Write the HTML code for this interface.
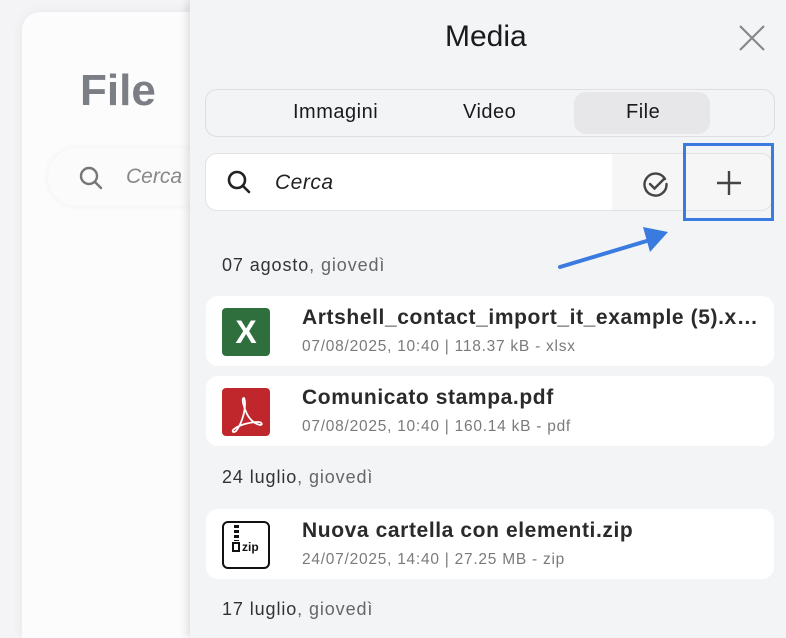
<!DOCTYPE html>
<html><head><style>
*{box-sizing:border-box;margin:0;padding:0}
html,body{width:786px;height:638px;overflow:hidden}
body{background:#f4f4f6;font-family:"Liberation Sans",sans-serif;position:relative}
.abs{position:absolute}
.card{left:206px;width:568px;height:70px;background:#fff;border-radius:12px}
.ic{left:16px;top:12px;width:48px;height:48px;border-radius:4px}
.t{left:96px;top:10px;font-size:21px;font-weight:bold;color:#2a2a2a;white-space:nowrap;width:458px;overflow:hidden;text-overflow:ellipsis;letter-spacing:0.6px}
.s{left:96px;top:42px;font-size:15.5px;color:#7a7a7a;white-space:nowrap;letter-spacing:0.75px}
.d{left:222px;font-size:18px;color:#333;letter-spacing:0.9px}
.d span{color:#666}
</style></head><body>
<div class="abs" style="left:22px;top:12px;width:200px;height:626px;background:#fcfcfc;border-radius:18px 18px 0 0;box-shadow:0 0 12px rgba(0,0,0,.06)"></div>
<div class="abs" style="left:80px;top:66px;font-size:44px;font-weight:bold;color:#7c7e85">File</div>
<div class="abs" style="left:48px;top:148px;width:160px;height:58px;border-radius:29px;background:#fbfbfb;box-shadow:0 0 8px rgba(0,0,0,.05)"></div>
<svg class="abs" style="left:78px;top:165px" width="26" height="26" viewBox="0 0 26 26"><circle cx="11" cy="11" r="8" fill="none" stroke="#777" stroke-width="2.4"/><line x1="17" y1="17" x2="23" y2="23" stroke="#777" stroke-width="2.4" stroke-linecap="round"/></svg>
<div class="abs" style="left:126px;top:165px;font-size:21px;font-style:italic;color:#888">Cerca</div>
<div class="abs" style="left:190px;top:0;width:596px;height:638px;background:#f3f4f6;box-shadow:-3px 0 8px rgba(0,0,0,.12)"></div>
<div class="abs" style="left:445px;top:20px;font-size:30px;color:#1a1a1a">Media</div>
<svg class="abs" style="left:738px;top:24px" width="28" height="28"><path d="M2 2L26 26M26 2L2 26" stroke="#888" stroke-width="2.2"/></svg>
<div class="abs" style="left:205px;top:89px;width:570px;height:48px;border:1px solid #dedee2;border-radius:12px;background:#f3f4f6"></div>
<div class="abs" style="left:574px;top:92px;width:136px;height:42px;border-radius:12px;background:#e7e7ea"></div>
<div class="abs" style="left:293px;top:101px;font-size:20px;color:#1a1a1a;letter-spacing:0.5px">Immagini</div>
<div class="abs" style="left:463px;top:101px;font-size:20px;color:#1a1a1a;letter-spacing:0.5px">Video</div>
<div class="abs" style="left:626px;top:101px;font-size:20px;color:#1a1a1a;letter-spacing:0.5px">File</div>
<div class="abs" style="left:205px;top:153px;width:568px;height:58px;border:1px solid #e2e2e5;border-radius:12px;background:#f6f6f7;overflow:hidden"><div style="width:406px;height:58px;background:#fff"></div></div>
<svg class="abs" style="left:226px;top:169px" width="26" height="26" viewBox="0 0 26 26"><circle cx="11" cy="11" r="8" fill="none" stroke="#222" stroke-width="2.6"/><line x1="17" y1="17" x2="23" y2="23" stroke="#222" stroke-width="2.6" stroke-linecap="round"/></svg>
<div class="abs" style="left:275px;top:171px;font-size:21px;font-style:italic;color:#222;letter-spacing:0.5px">Cerca</div>
<svg class="abs" style="left:642px;top:170px" width="28" height="28" viewBox="0 0 28 28"><path d="M23 9A11 11 0 1 0 24.5 14" fill="none" stroke="#444" stroke-width="2.4" stroke-linecap="round"/><path d="M8 14l4.5 4.5L22 9" fill="none" stroke="#444" stroke-width="2.4" stroke-linecap="round"/></svg>
<svg class="abs" style="left:715px;top:169px" width="28" height="28"><path d="M14 2v24M2 14h24" stroke="#444" stroke-width="2.4"/></svg>
<div class="abs" style="left:683px;top:143px;width:91px;height:78px;border:3.5px solid #3a7be0"></div>
<svg class="abs" style="left:555px;top:222px" width="120" height="52"><line x1="5" y1="45" x2="95" y2="18" stroke="#3a7be0" stroke-width="4" stroke-linecap="round"/><polygon points="113,10 88,5 95,30" fill="#3a7be0"/></svg>
<div class="abs d" style="top:255px">07 agosto<span>, giovedì</span></div>
<div class="abs card" style="top:296px">
<div class="abs ic" style="background:#2f6f3e;color:#fff;font-size:32px;font-weight:bold;text-align:center;line-height:48px">X</div>
<div class="abs t">Artshell_contact_import_it_example (5).xlsx</div>
<div class="abs s">07/08/2025, 10:40 | 118.37 kB - xlsx</div></div>
<div class="abs card" style="top:376px">
<div class="abs ic" style="background:#c0272d"><svg width="48" height="48" viewBox="0 0 48 48"><path d="M22 10c-3 0 0 10 3 16s8 10 13 11c3 0 2-3-2-3-8 0-20 3-25 8-1 2 1 3 3 1 5-6 9-18 9-27 0-4-1-6-1-6z" fill="none" stroke="#fff" stroke-width="1.8"/></svg></div>
<div class="abs t">Comunicato stampa.pdf</div>
<div class="abs s">07/08/2025, 10:40 | 160.14 kB - pdf</div></div>
<div class="abs d" style="top:467px">24 luglio<span>, giovedì</span></div>
<div class="abs card" style="top:509px">
<div class="abs ic" style="border:2.5px solid #111;border-radius:6px;background:#fff"><div class="abs" style="left:10px;top:2px;width:5px;height:16px;background:repeating-linear-gradient(#111 0 3px,#fff 3px 5px)"></div><div class="abs" style="left:8px;top:19px;width:8px;height:10px;border:2px solid #111"></div><div class="abs" style="left:18px;top:17px;font-size:12px;font-weight:bold;color:#111">zip</div></div>
<div class="abs t">Nuova cartella con elementi.zip</div>
<div class="abs s">24/07/2025, 14:40 | 27.25 MB - zip</div></div>
<div class="abs d" style="top:599px">17 luglio<span>, giovedì</span></div>
</body></html>
